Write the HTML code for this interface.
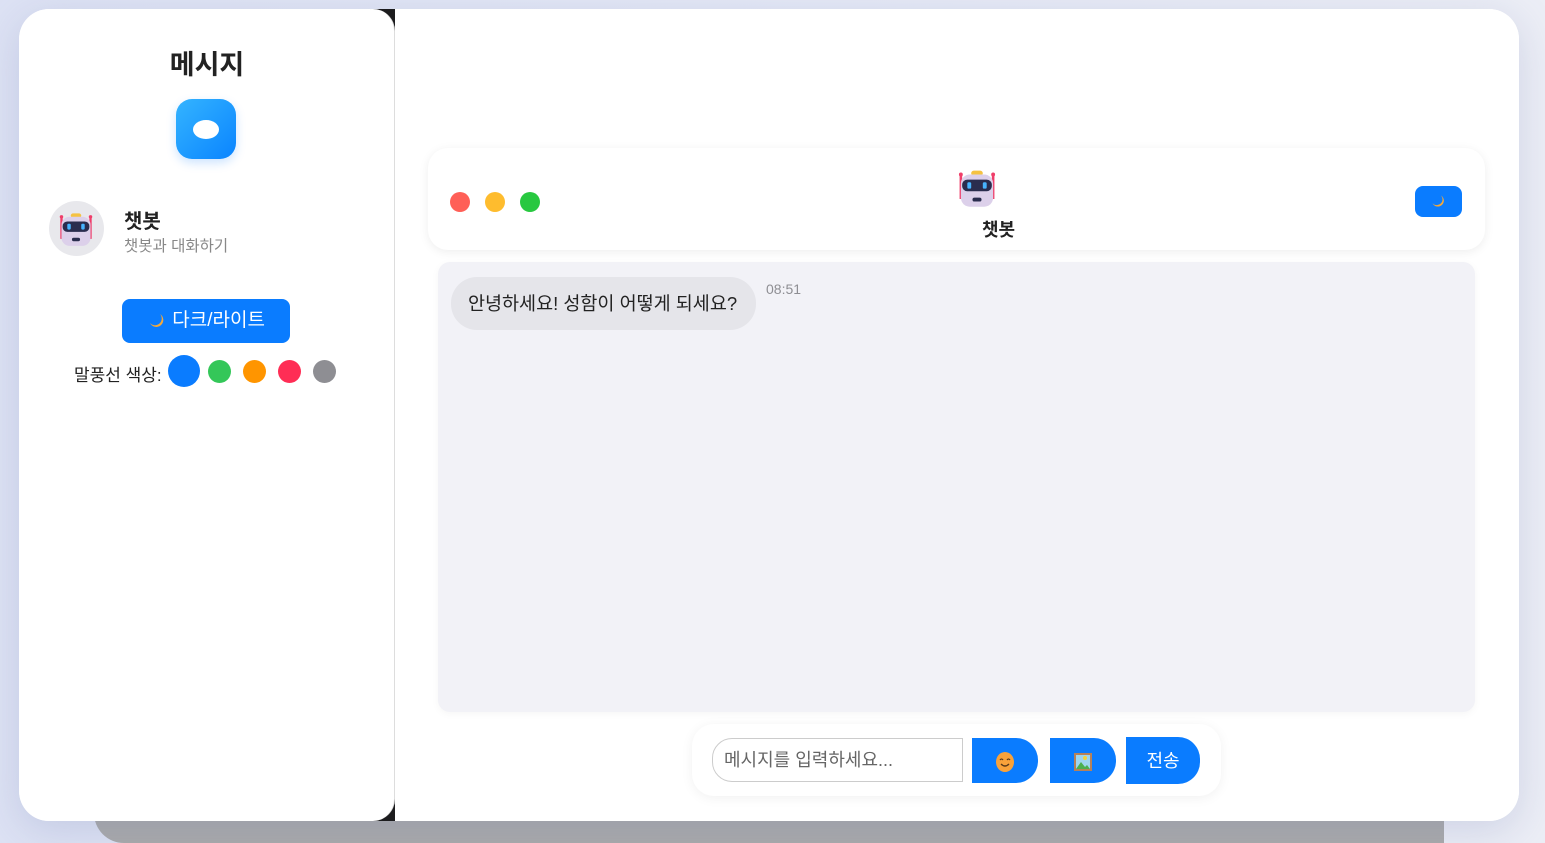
<!DOCTYPE html>
<html><head><meta charset="utf-8"><style>
*{box-sizing:border-box;margin:0;padding:0}
html{width:1545px;height:843px;overflow:hidden}
body{width:1545px;height:843px;overflow:hidden;background:linear-gradient(90deg,#dde2f4,#e4e8f6 50%,#eceef6);font-family:"Liberation Sans","Noto Sans CJK KR",sans-serif;position:relative}
.gray{position:absolute;left:94px;top:800px;width:1350px;height:43px;background:#a9a9a9;border-radius:0 0 0 30px}
.app{position:absolute;left:19px;top:9px;width:1500px;height:812px;background:#fff;border-radius:30px;overflow:hidden;box-shadow:0 10px 40px rgba(120,130,180,.25)}
.blk{position:absolute;left:350px;top:0;width:26px;height:812px;background:#1c1c1e}
.side{position:absolute;left:0;top:0;width:376px;height:812px;background:#fff;border-radius:30px 22px 22px 30px;border-right:1px solid #ddd}
.main{position:absolute;left:376px;top:0;width:1124px;height:812px;background:#fff}
h1{position:absolute;top:34px;width:376px;text-align:center;font-size:27px;font-weight:bold;color:#222}
.logo{position:absolute;left:157px;top:90px;width:60px;height:60px;border-radius:16px;background:linear-gradient(135deg,#34b4ff,#0a84ff);box-shadow:0 4px 10px rgba(0,120,255,.2)}
.logo i{position:absolute;left:17px;top:21px;width:26px;height:19px;border-radius:50%;background:#fff}
.av{position:absolute;left:30px;top:192px;width:55px;height:55px;border-radius:50%;background:#e8e8ec}
.name{position:absolute;left:105px;top:196px;font-size:20px;color:#222;font-weight:bold}
.sub{position:absolute;left:105px;top:225px;font-size:15.5px;color:#888}
.dl{position:absolute;left:103px;top:290px;width:168px;height:44px;border-radius:8px;background:#0a7cff;color:#fff;font-size:19px;text-align:center;line-height:44px}
.cl{position:absolute;left:55px;top:352px;font-size:17px;color:#222}
.dot{position:absolute;border-radius:50%}
.hdr{position:absolute;left:33px;top:139px;width:1057px;height:102px;border-radius:20px;background:#fff;box-shadow:0 2px 10px rgba(0,0,0,.07)}
.tl{position:absolute;top:44px;width:20px;height:20px;border-radius:50%}
.hn{position:absolute;left:554px;top:68px;font-size:18px;font-weight:bold;color:#222}
.mb{position:absolute;left:987px;top:38px;width:47px;height:31px;border-radius:8px;background:#0a7cff;text-align:center}
.chat{position:absolute;left:43px;top:253px;width:1037px;height:450px;border-radius:12px;background:#f2f2f7;box-shadow:0 2px 8px rgba(0,0,0,.04)}
.bub{position:absolute;left:13px;top:15px;width:305px;height:53px;border-radius:26px;background:#e5e5ea;font-size:18.5px;color:#222;line-height:53px;padding-left:17px}
.tm{position:absolute;left:328px;top:19px;font-size:14px;color:#8e8e93}
.inp{position:absolute;left:297px;top:715px;width:529px;height:72px;border-radius:22px;background:#fff;box-shadow:0 2px 12px rgba(0,0,0,.06)}
.field{position:absolute;left:20px;top:14px;width:251px;height:44px;border:1px solid #ccc;border-radius:20px 0 0 20px;font-size:18px;color:#666;line-height:42px;padding-left:11px}
.b{position:absolute;top:14px;height:45px;background:#0a7cff;border-radius:0 22px 22px 0;color:#fff;text-align:center;line-height:47px;font-size:18px}
svg{display:inline-block;vertical-align:middle}
</style></head><body>
<div class="gray"></div>
<div class="app">
<div class="blk"></div>
<div class="side">
<h1>메시지</h1>
<div class="logo"><i></i></div>
<div class="av"><svg style="position:absolute;left:10px;top:10px" width="34" height="36" viewBox="14 11 27 31"><rect x="14" y="16" width="2" height="19" fill="#ef3e6a"/><circle cx="15" cy="16" r="1.5" fill="#ef3e6a"/><rect x="39" y="16" width="2" height="19" fill="#ef3e6a"/><circle cx="40" cy="16" r="1.5" fill="#ef3e6a"/><rect x="23" y="13" width="9" height="4" rx="2" fill="#f5c242"/><rect x="15" y="16" width="25" height="25" rx="7" fill="#dcd0ea"/><rect x="16" y="20" width="23" height="9" rx="4" fill="#2a2d4e"/><rect x="20" y="22" width="3" height="5" rx="1" fill="#47b4ff"/><rect x="32" y="22" width="3" height="5" rx="1" fill="#47b4ff"/><rect x="24" y="34" width="7" height="3" rx="1.5" fill="#2a2d4e"/></svg></div>
<div class="name">챗봇</div>
<div class="sub">챗봇과 대화하기</div>
<div class="dl"><svg width="20" height="20" viewBox="0 0 20 20"><path d="M13 3a7 7 0 1 1-10 9a6 6 0 0 0 10-9z" fill="#f4a93a"/></svg> 다크/라이트</div>
<div class="cl">말풍선 색상:</div>
<div class="dot" style="left:149px;top:346px;width:32px;height:32px;background:#0a7cff"></div>
<div class="dot" style="left:189px;top:351px;width:23px;height:23px;background:#34c759"></div>
<div class="dot" style="left:224px;top:351px;width:23px;height:23px;background:#ff9500"></div>
<div class="dot" style="left:259px;top:351px;width:23px;height:23px;background:#ff2d55"></div>
<div class="dot" style="left:294px;top:351px;width:23px;height:23px;background:#8e8e93"></div>
</div>
<div class="main">
<div class="hdr">
<div class="tl" style="left:22px;background:#ff5f57"></div>
<div class="tl" style="left:57px;background:#febc2e"></div>
<div class="tl" style="left:92px;background:#28c840"></div>
<svg style="position:absolute;left:530px;top:20px" width="38" height="40" viewBox="14 11 27 31"><rect x="14" y="16" width="2" height="19" fill="#ef3e6a"/><circle cx="15" cy="16" r="1.5" fill="#ef3e6a"/><rect x="39" y="16" width="2" height="19" fill="#ef3e6a"/><circle cx="40" cy="16" r="1.5" fill="#ef3e6a"/><rect x="23" y="13" width="9" height="4" rx="2" fill="#f5c242"/><rect x="15" y="16" width="25" height="25" rx="7" fill="#dcd0ea"/><rect x="16" y="20" width="23" height="9" rx="4" fill="#2a2d4e"/><rect x="20" y="22" width="3" height="5" rx="1" fill="#47b4ff"/><rect x="32" y="22" width="3" height="5" rx="1" fill="#47b4ff"/><rect x="24" y="34" width="7" height="3" rx="1.5" fill="#2a2d4e"/></svg>
<div class="hn">챗봇</div>
<div class="mb"><svg style="margin-top:7px" width="17" height="17" viewBox="0 0 20 20"><path d="M13 3a7 7 0 1 1-10 9a6 6 0 0 0 10-9z" fill="#f4a93a"/></svg></div>
</div>
<div class="chat">
<div class="bub">안녕하세요! 성함이 어떻게 되세요?</div>
<div class="tm">08:51</div>
</div>
<div class="inp">
<div class="field">메시지를 입력하세요...</div>
<div class="b" style="left:280px;width:66px"><svg width="20" height="22" viewBox="0 0 20 22"><ellipse cx="10" cy="11" rx="9" ry="10" fill="#f9a23a"/><path d="M5 9q1.5-2 3 0M12 9q1.5-2 3 0" stroke="#5a3a1a" stroke-width="1.3" fill="none"/><path d="M6 13q4 4 8 0" stroke="#5a3a1a" stroke-width="1.3" fill="none"/></svg></div>
<div class="b" style="left:358px;width:66px"><svg width="20" height="20" viewBox="0 0 20 20"><rect x="1" y="1" width="18" height="18" fill="#b5815a"/><rect x="3" y="3" width="14" height="14" fill="#9fd6f0"/><circle cx="12" cy="6" r="2" fill="#f5d33d"/><path d="M3 17l5-7 4 5 2-2 3 4z" fill="#4caf50"/></svg></div>
<div class="b" style="left:434px;width:74px;top:13px;height:47px;line-height:49px">전송</div>
</div>
</div>
</div>
</body></html>
